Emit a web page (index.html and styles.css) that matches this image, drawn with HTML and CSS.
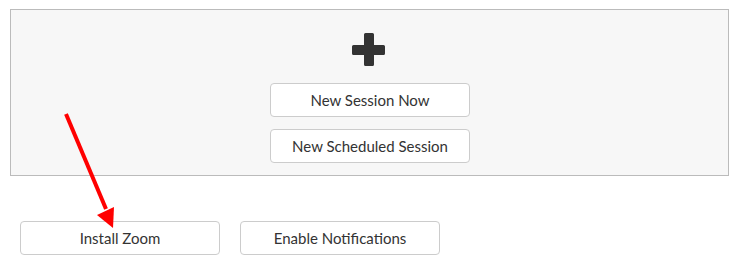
FILE: index.html
```html
<!DOCTYPE html>
<html>
<head>
<meta charset="utf-8">
<link rel="stylesheet" href="styles.css">
</head>
<body>
<div class="page">
  <div class="panel">
    <svg class="plus" width="33" height="33" viewBox="0 0 33 33">
      <path d="M12 1.5 Q12 0 13.5 0 H20.5 Q22 0 22 1.5 V12 H31.5 Q33 12 33 13.5 V20.5 Q33 22 31.5 22 H22 V31.5 Q22 33 20.5 33 H13.5 Q12 33 12 31.5 V22 H1.5 Q0 22 0 20.5 V13.5 Q0 12 1.5 12 H12 Z" fill="#333"/>
    </svg>
    <button class="btn">New Session Now</button>
    <button class="btn">New Scheduled Session</button>
  </div>
  <div class="actions">
    <button class="btn">Install Zoom</button>
    <button class="btn">Enable Notifications</button>
  </div>
</div>
<svg class="arrow" width="738" height="270" viewBox="0 0 738 270">
  <line x1="66" y1="114" x2="106" y2="209" stroke="#f00" stroke-width="4"/>
  <polygon points="97,215 114,207 113,228" fill="#f00"/>
</svg>
</body>
</html>
```
FILE: styles.css
```css
html, body {
  margin: 0;
  padding: 0;
  background: #fff;
}
body {
  font-family: Lato, "Open Sans", sans-serif;
  color: #333;
  position: relative;
  width: 738px;
  height: 270px;
  overflow: hidden;
}
.page {
  padding: 9px 9px 0 10px;
}
.panel {
  box-sizing: border-box;
  width: 719px;
  height: 167px;
  border: 1px solid #bbb;
  background: #f7f7f7;
  display: flex;
  flex-direction: column;
  align-items: center;
  padding-top: 23px;
  padding-left: 1px;
}
.plus {
  display: block;
  margin-bottom: 17px;
  margin-right: 3px;
}
.btn {
  box-sizing: border-box;
  width: 200px;
  height: 34px;
  border: 1px solid #ccc;
  border-radius: 4px;
  background: #fff;
  font-family: Lato, "Open Sans", sans-serif;
  font-size: 15px;
  line-height: 30px;
  color: #333;
  padding: 0 0 1px;
  margin: 0;
}
.panel .btn + .btn {
  margin-top: 12px;
}
.actions {
  display: flex;
  gap: 20px;
  padding: 45px 0 0 10px;
}
.arrow {
  position: absolute;
  left: 0;
  top: 0;
  pointer-events: none;
}
```
